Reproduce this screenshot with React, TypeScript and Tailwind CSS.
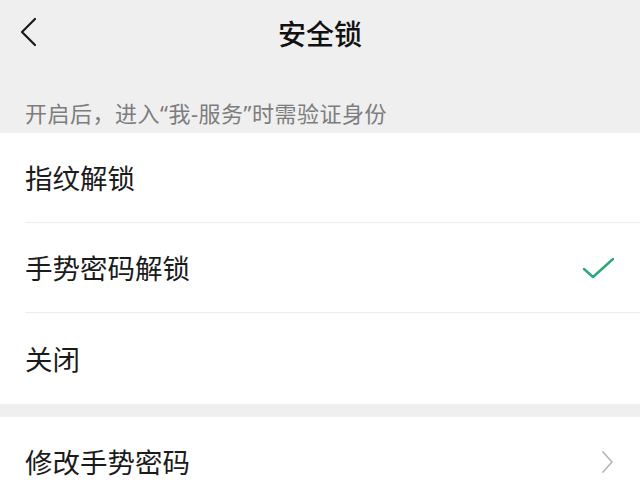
import React from 'react'

const FONT = { fontFamily: '"Noto Sans CJK SC", "Noto Sans", sans-serif' }

function Row({ label, right, divider = true, h = 'h-[89px]' }: { label: string; right?: React.ReactNode; divider?: boolean; h?: string }) {
  return (
    <div className="bg-white">
      <div className={`${h} flex items-center justify-between pl-[25px] pr-[26px]`}>
        <span className="text-[27.5px] text-[#1b1b1b] leading-none">{label}</span>
        {right}
      </div>
      {divider && <div className="ml-[25px] h-px bg-[#ececec]" />}
    </div>
  )
}

export default function App() {
  return (
    <div className="w-[640px] h-[495px] overflow-hidden bg-[#efefef]" style={FONT}>
      {/* 导航栏 */}
      <div className="relative h-[66px] flex items-center justify-center">
        <svg className="absolute left-[18px] top-[16px]" width="22" height="32" viewBox="0 0 22 32" fill="none" stroke="#1a1a1a" strokeWidth="2.2" strokeLinecap="round" strokeLinejoin="round">
          <path d="M17 3 L4 16 L17 29" />
        </svg>
        <span className="text-[28px] font-medium text-[#111] leading-none">安全锁</span>
      </div>

      {/* 说明 */}
      <div
        className="px-[25px] pt-[34px] pb-[7px] text-[22px] leading-[26px] tracking-[0.5px] text-[#7d7d7d]"
        style={{ fontFamily: '"Noto Sans", "Noto Sans CJK SC", sans-serif' }}
      >
        开启后，进入“我-服务”时需验证身份
      </div>

      <Row label="指纹解锁" />
      <Row
        label="手势密码解锁"
        right={
          <svg width="32" height="22" viewBox="0 0 32 22" fill="none" stroke="#2aa876" strokeWidth="2.4" strokeLinecap="round" strokeLinejoin="round">
            <path d="M2 12 L11 20 L31 2" />
          </svg>
        }
      />
      <Row label="关闭" divider={false} h="h-[91px]" />

      <div className="h-[13px]" />

      <Row
        label="修改手势密码"
        divider={false}
        h="h-[90px]"
        right={
          <svg width="14" height="24" viewBox="0 0 14 24" fill="none" stroke="#b8b8b8" strokeWidth="1.8" strokeLinecap="round" strokeLinejoin="round">
            <path d="M3 2 L12 12 L3 22" />
          </svg>
        }
      />
    </div>
  )
}
